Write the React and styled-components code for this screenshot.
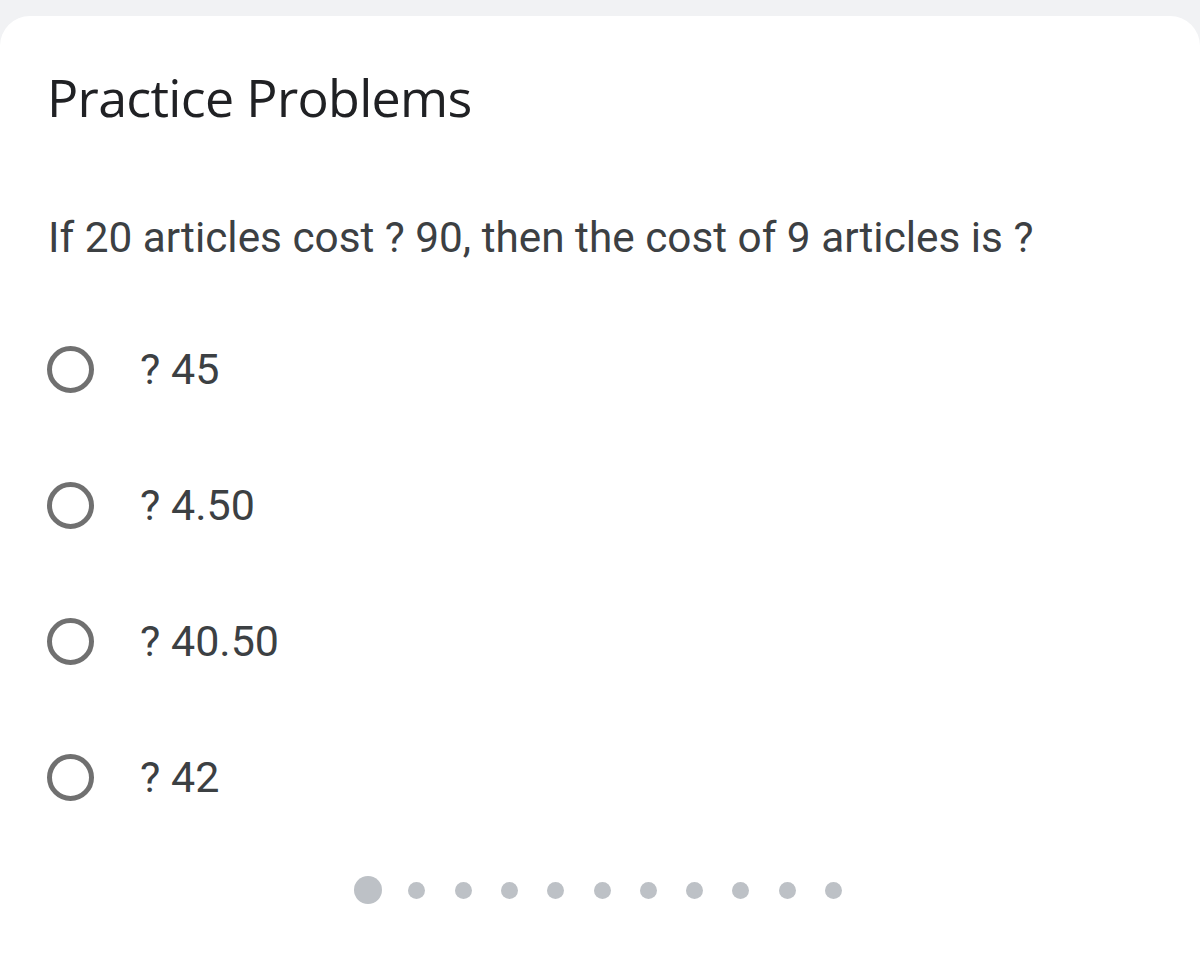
import React, { useState } from 'react';
import styled, { createGlobalStyle } from 'styled-components';

const GlobalStyle = createGlobalStyle`
  html, body {
    margin: 0;
    padding: 0;
    background: #f1f2f4;
  }
`;

const Page = styled.div`
  width: 1200px;
  height: 962px;
  padding-top: 16px;
  box-sizing: border-box;
  background: #f1f2f4;
  overflow: hidden;
`;

const Card = styled.div`
  height: 100%;
  background: #ffffff;
  border-radius: 30px 30px 0 0;
  padding: 50px 48px 0 47px;
  box-sizing: border-box;
  display: flex;
  flex-direction: column;
`;

const Title = styled.h1`
  margin: 0;
  font-family: 'Open Sans', Roboto, sans-serif;
  font-weight: 400;
  font-size: 52px;
  line-height: 62px;
  color: #202124;
  letter-spacing: -0.7px;
`;

const Question = styled.p`
  margin: 85px 0 0 1px;
  font-family: Roboto, 'Liberation Sans', sans-serif;
  font-size: 42.3px;
  line-height: 50px;
  color: #3c4043;
`;

const Options = styled.div`
  margin-top: 83px;
  display: flex;
  flex-direction: column;
  gap: 90px;
`;

const Option = styled.label`
  display: flex;
  align-items: center;
  gap: 46px;
  height: 46px;
  cursor: pointer;
`;

const Radio = styled.span`
  width: 47px;
  height: 47px;
  box-sizing: border-box;
  border-radius: 50%;
  border: 5px solid #707070;
  display: flex;
  align-items: center;
  justify-content: center;
  &::after {
    content: '';
    width: 23px;
    height: 23px;
    border-radius: 50%;
    background: ${(p) => (p.checked ? '#1a73e8' : 'transparent')};
  }
`;

const OptionText = styled.span`
  font-family: Roboto, 'Liberation Sans', sans-serif;
  font-size: 43px;
  color: #3c4043;
`;

const Dots = styled.div`
  margin-top: 76px;
  display: flex;
  align-items: center;
  justify-content: center;
  gap: 29.3px;
  padding-right: 3px;
`;

const Dot = styled.span`
  width: ${(p) => (p.active ? '28px' : '17px')};
  height: ${(p) => (p.active ? '28px' : '17px')};
  border-radius: 50%;
  background: #bdc1c6;
  margin-right: ${(p) => (p.active ? '-3px' : '0')};
`;

const answers = ['? 45', '? 4.50', '? 40.50', '? 42'];

const App = () => {
  const [selected, setSelected] = useState(null);

  return (
    <Page>
      <GlobalStyle />
      <Card>
        <Title>Practice Problems</Title>
        <Question>If 20 articles cost ? 90, then the cost of 9 articles is ?</Question>
        <Options>
          {answers.map((a, i) => (
            <Option key={a} onClick={() => setSelected(i)}>
              <Radio checked={selected === i} />
              <OptionText>{a}</OptionText>
            </Option>
          ))}
        </Options>
        <Dots>
          {Array.from({ length: 11 }).map((_, i) => (
            <Dot key={i} active={i === 0} />
          ))}
        </Dots>
      </Card>
    </Page>
  );
};

export default App;
